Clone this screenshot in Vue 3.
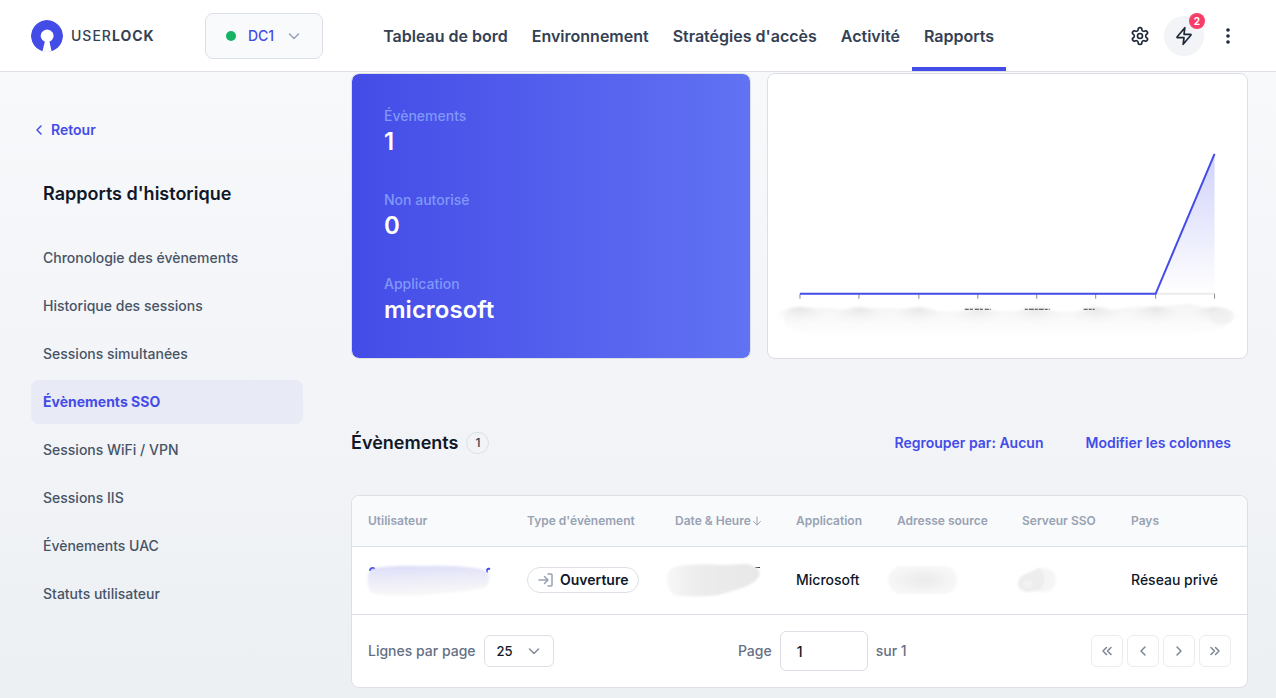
<template>
  <div class="app">
    <header class="header">
      <a class="brand" href="#" aria-label="UserLock">
        <svg class="brand-logo" viewBox="0 0 32 32" aria-hidden="true">
          <circle cx="16" cy="16" r="16" fill="#444ce7" />
          <path d="M13.8 21.8a6.4 6.4 0 1 1 4.7 0L21 33H11z" fill="#fff" />
        </svg>
        <span class="brand-name">USER<b>LOCK</b></span>
      </a>
      <button class="server" type="button">
        <span class="server-dot"></span>
        <span>{{ server }}</span>
        <svg class="icon-16" viewBox="0 0 16 16" aria-hidden="true"><path d="M3.5 6 8 10.5 12.5 6" /></svg>
      </button>
      <nav class="nav">
        <a
          v-for="item in navItems"
          :key="item"
          href="#"
          class="nav-link"
          :class="{ active: item === currentNav }"
          @click.prevent="currentNav = item"
        >{{ item }}</a>
      </nav>
      <div class="actions">
        <button class="action" type="button" aria-label="Paramètres">
          <svg class="icon-20" viewBox="0 0 24 24" aria-hidden="true">
            <path d="M12.22 2h-.44a2 2 0 0 0-2 2v.18a2 2 0 0 1-1 1.73l-.43.25a2 2 0 0 1-2 0l-.15-.08a2 2 0 0 0-2.73.73l-.22.38a2 2 0 0 0 .73 2.73l.15.1a2 2 0 0 1 1 1.72v.51a2 2 0 0 1-1 1.74l-.15.09a2 2 0 0 0-.73 2.73l.22.38a2 2 0 0 0 2.73.73l.15-.08a2 2 0 0 1 2 0l.43.25a2 2 0 0 1 1 1.73V20a2 2 0 0 0 2 2h.44a2 2 0 0 0 2-2v-.18a2 2 0 0 1 1-1.73l.43-.25a2 2 0 0 1 2 0l.15.08a2 2 0 0 0 2.73-.73l.22-.39a2 2 0 0 0-.73-2.73l-.15-.08a2 2 0 0 1-1-1.74v-.5a2 2 0 0 1 1-1.74l.15-.09a2 2 0 0 0 .73-2.73l-.22-.38a2 2 0 0 0-2.73-.73l-.15.08a2 2 0 0 1-2 0l-.43-.25a2 2 0 0 1-1-1.73V4a2 2 0 0 0-2-2z" />
            <circle cx="12" cy="12" r="3" />
          </svg>
        </button>
        <button class="action filled" type="button" aria-label="Actions rapides">
          <svg class="icon-20" viewBox="0 0 24 24" aria-hidden="true">
            <path d="M13 2 4.09 12.69c-.35.42-.52.63-.52.81 0 .15.07.3.19.39.14.11.41.11.96.11H12l-1 8 8.91-10.69c.35-.42.52-.63.52-.81a.5.5 0 0 0-.19-.39c-.14-.11-.41-.11-.96-.11H12l1-8z" />
          </svg>
          <span class="badge">2</span>
        </button>
        <button class="action" type="button" aria-label="Menu">
          <svg class="icon-20" viewBox="0 0 20 20" aria-hidden="true">
            <g class="dots">
              <circle cx="10" cy="4" r="1.8" />
              <circle cx="10" cy="10" r="1.8" />
              <circle cx="10" cy="16" r="1.8" />
            </g>
          </svg>
        </button>
      </div>
    </header>

    <div class="page">
      <aside class="sidebar">
        <a class="back" href="#">
          <svg class="icon-16" viewBox="0 0 16 16" aria-hidden="true"><path d="M10 4 6 8l4 4" /></svg>
          Retour
        </a>
        <h2 class="sidebar-title">Rapports d'historique</h2>
        <nav class="menu">
          <a
            v-for="report in reports"
            :key="report"
            href="#"
            class="menu-link"
            :class="{ active: report === currentReport }"
            @click.prevent="currentReport = report"
          >{{ report }}</a>
        </nav>
      </aside>

      <main class="content">
        <div class="cards">
          <dl class="card summary">
            <div v-for="stat in stats" :key="stat.label">
              <dt>{{ stat.label }}</dt>
              <dd>{{ stat.value }}</dd>
            </div>
          </dl>
          <div class="card">
            <svg class="chart" viewBox="0 0 479 284" aria-hidden="true">
              <defs>
                <linearGradient id="area" x1="0" y1="0" x2="0" y2="1">
                  <stop offset="0" stop-color="#444ce7" stop-opacity="0.25" />
                  <stop offset="1" stop-color="#444ce7" stop-opacity="0" />
                </linearGradient>
                <linearGradient id="axisFade" x1="0" y1="0" x2="0" y2="1">
                  <stop offset="0" stop-color="#f4f4f4" />
                  <stop offset="0.4" stop-color="#f9f9f9" />
                  <stop offset="1" stop-color="#ffffff" />
                </linearGradient>
                <radialGradient id="spot" cx="0.5" cy="0.1" r="0.8">
                  <stop offset="0" stop-color="#dcdcdc" />
                  <stop offset="1" stop-color="#ffffff" stop-opacity="0" />
                </radialGradient>
                <filter id="soft"><feGaussianBlur stdDeviation="1" /></filter>
              </defs>
              <path d="M388 220H447" stroke="#ebebeb" stroke-width="2" />
              <path v-for="x in ticks" :key="x" :d="`M${x} 220v5`" stroke="#8c8c8c" />
              <path d="M388 220 447 80V220z" fill="url(#area)" />
              <path d="M32 220H388L447 80" fill="none" stroke="#444ce7" stroke-width="2" />
              <!-- blurred date labels -->
              <path d="M16 244q1-9 12-10h33l20 3 28-3 30 1 20 2 40 1 40-1 60 1 45-2 22-3 36-1 20-2 20 5q22 0 22 10-4 10-16 12-50 8-110 8H120q-60 0-95-8-9-3-9-10z" fill="url(#axisFade)" filter="url(#soft)" />
              <ellipse v-for="x in ticks" :key="'s' + x" :cx="x" cy="245" rx="24" ry="12" fill="url(#spot)" fill-opacity="0.6" filter="url(#soft)" />
              <ellipse cx="454" cy="243" rx="12" ry="8" fill="#efefef" fill-opacity="0.6" filter="url(#soft)" />
              <g stroke="#3c3c3c">
                <path d="M197 235.5h26" stroke-dasharray="4 1 3 2" />
                <path d="M257 235.5h25" stroke-dasharray="3 1 5 1" />
                <path d="M316 235.5h11" stroke-dasharray="4 1 3 1" />
              </g>
            </svg>
          </div>
        </div>

        <div class="section-head">
          <h2 class="section-title">Évènements</h2>
          <span class="count">1</span>
          <div class="section-actions">
            <button class="link-button" type="button">Regrouper par: Aucun</button>
            <button class="link-button" type="button">Modifier les colonnes</button>
          </div>
        </div>

        <div class="card table-card">
          <table>
            <colgroup>
              <col v-for="column in columns" :key="column.label" :style="{ width: column.width + 'px' }">
            </colgroup>
            <thead>
              <tr>
                <th v-for="column in columns" :key="column.label" scope="col">
                  <span class="th-label">{{ column.label }}<svg v-if="column.sorted" class="sort" viewBox="0 0 12 12" aria-hidden="true"><path d="M6 2v8M2.5 6.5 6 10l3.5-3.5" /></svg></span>
                </th>
              </tr>
            </thead>
            <tbody>
              <tr>
                <td>
                  <svg class="smudge" width="122" height="34" viewBox="0 0 122 34" aria-hidden="true">
                    <defs>
                      <linearGradient id="userFade" x1="0" y1="0" x2="0.15" y2="1">
                        <stop offset="0" stop-color="#dcdcfa" />
                        <stop offset="0.5" stop-color="#ececf8" />
                        <stop offset="1" stop-color="#f8f8f8" />
                      </linearGradient>
                    </defs>
                    <path d="M2 8q0-3 3-3l2 1M119 10V7q1-2 3-1" fill="none" stroke="#444ce7" stroke-width="2" />
                    <path d="M5 6Q20 2 50 3q30-1 48 1 16 1 22 5 3 8-2 15-12 4-40 6-40 5-72 1Q1 29 0 22-2 9 5 6z" fill="url(#userFade)" filter="url(#soft)" />
                  </svg>
                </td>
                <td>
                  <span class="tag">
                    <svg class="icon-16" viewBox="0 0 16 16" aria-hidden="true"><path d="M1 8h9M6.5 4.5 10 8l-3.5 3.5M10 2h3q1 0 1 1v10q0 1-1 1h-3" /></svg>
                    Ouverture
                  </span>
                </td>
                <td>
                  <svg class="smudge" width="88" height="34" viewBox="0 0 88 34" aria-hidden="true">
                    <defs>
                      <linearGradient id="dateFade" x1="0" y1="0" x2="1" y2="0">
                        <stop offset="0" stop-color="#f7f7f7" />
                        <stop offset="0.4" stop-color="#ebebec" />
                        <stop offset="1" stop-color="#e8e8e8" />
                      </linearGradient>
                    </defs>
                    <path d="M80 4.5h5" stroke="#30343c" />
                    <path d="M2 3Q25 0 44 2l28-1q12 2 13 10-3 9-18 14l-24 7Q20 35-1 32-9 26-8 14-7 5 2 3z" fill="url(#dateFade)" filter="url(#soft)" />
                  </svg>
                </td>
                <td>Microsoft</td>
                <td>
                  <svg class="smudge" width="60" height="34" viewBox="0 0 60 34" aria-hidden="true">
                    <defs>
                      <radialGradient id="addressFade">
                        <stop offset="0" stop-color="#ebebeb" />
                        <stop offset="1" stop-color="#f7f7f7" />
                      </radialGradient>
                    </defs>
                    <rect x="-9" y="3" width="69" height="28" rx="14" fill="url(#addressFade)" filter="url(#soft)" />
                  </svg>
                </td>
                <td>
                  <svg class="smudge" width="34" height="34" viewBox="0 0 34 34" aria-hidden="true">
                    <ellipse cx="21" cy="17" rx="13" ry="12" fill="#f5f5f5" filter="url(#soft)" />
                    <path d="M-4 20Q-3 12 6 10l12-5q9 11 0 22l-10 2Q-4 29-4 20z" fill="#ededed" filter="url(#soft)" />
                    <ellipse cx="6" cy="21" rx="5" ry="4" fill="#f2f2f2" filter="url(#soft)" />
                  </svg>
                </td>
                <td>Réseau privé</td>
              </tr>
            </tbody>
          </table>
          <div class="table-footer">
            <div class="field">
              <label for="rows">Lignes par page</label>
              <div class="select">
                <select id="rows" v-model="rows">
                  <option>25</option>
                  <option>50</option>
                  <option>100</option>
                </select>
                <svg class="icon-16" viewBox="0 0 16 16" aria-hidden="true"><path d="M3.5 6 8 10.5 12.5 6" /></svg>
              </div>
            </div>
            <div class="field">
              <label for="page">Page</label>
              <input id="page" v-model="page" class="page-input" type="text">
              <span>sur 1</span>
            </div>
            <div class="pager">
              <button v-for="step in pager" :key="step.label" type="button" :aria-label="step.label">
                <svg class="icon-16" viewBox="0 0 16 16" aria-hidden="true"><path :d="step.path" /></svg>
              </button>
            </div>
          </div>
        </div>
      </main>
    </div>
  </div>
</template>

<script setup>
import { ref } from 'vue'

const server = ref('DC1')
const navItems = ['Tableau de bord', 'Environnement', "Stratégies d'accès", 'Activité', 'Rapports']
const currentNav = ref('Rapports')

const reports = [
  'Chronologie des évènements',
  'Historique des sessions',
  'Sessions simultanées',
  'Évènements SSO',
  'Sessions WiFi / VPN',
  'Sessions IIS',
  'Évènements UAC',
  'Statuts utilisateur'
]
const currentReport = ref('Évènements SSO')

const stats = [
  { label: 'Évènements', value: '1' },
  { label: 'Non autorisé', value: '0' },
  { label: 'Application', value: 'microsoft' }
]

// eight evenly spaced dates on the axis
const ticks = Array.from({ length: 8 }, (_, i) => Math.round(32 + i * 415 / 7))

const columns = [
  { label: 'Utilisateur', width: 159 },
  { label: "Type d'évènement", width: 148 },
  { label: 'Date & Heure', width: 121, sorted: true },
  { label: 'Application', width: 101 },
  { label: 'Adresse source', width: 125 },
  { label: 'Serveur SSO', width: 109 },
  { label: 'Pays', width: 132 }
]

const rows = ref('25')
const page = ref('1')
const pager = [
  { label: 'Première page', path: 'M7.5 4.5 4 8l3.5 3.5M12 4.5 8.5 8l3.5 3.5' },
  { label: 'Page précédente', path: 'M10 4 6 8l4 4' },
  { label: 'Page suivante', path: 'M6 4l4 4-4 4' },
  { label: 'Dernière page', path: 'M4 4.5 7.5 8 4 11.5M8.5 4.5 12 8l-3.5 3.5' }
]
</script>

<style>
body {
  margin: 0;
}
</style>

<style scoped>
.app {
  min-height: 100vh;
  display: flex;
  flex-direction: column;
  background: linear-gradient(#f9fafc, #f3f4f7 55%, #ecf0f3);
  color: #101828;
  font-family: Inter, "Liberation Sans", sans-serif;
  font-size: 14px;
  font-weight: 500;
  line-height: 20px;
}
.app * {
  box-sizing: border-box;
}
a {
  color: inherit;
  text-decoration: none;
}
button,
input,
select {
  font: inherit;
  color: inherit;
}
button {
  cursor: pointer;
}
svg {
  display: block;
  flex: none;
}
.icon-16,
.icon-20,
.sort {
  fill: none;
  stroke: currentColor;
  stroke-linecap: round;
  stroke-linejoin: round;
}
.icon-16 {
  width: 16px;
  height: 16px;
  stroke-width: 1.5;
}
.icon-20 {
  width: 20px;
  height: 20px;
  stroke-width: 2;
}

.header {
  display: flex;
  align-items: center;
  height: 72px;
  padding: 0 28px 0 31px;
  background: #fff;
  border-bottom: 1px solid #dcdfe6;
}
.brand {
  display: flex;
  align-items: center;
  gap: 8px;
  width: 174px;
  color: #344054;
}
.brand-logo {
  width: 32px;
  height: 32px;
  border-radius: 50%;
}
.brand-name {
  letter-spacing: 1px;
}
.brand-name b {
  font-weight: 700;
}
.server {
  display: flex;
  align-items: center;
  gap: 12px;
  height: 46px;
  padding: 0 20px;
  background: #f9fafc;
  border: 1px solid #dcdfe6;
  border-radius: 8px;
  color: #444ce7;
}
.server-dot {
  width: 10px;
  height: 10px;
  border-radius: 50%;
  background: #16b364;
}
.server .icon-16 {
  color: #98a2b3;
}
.nav {
  display: flex;
  align-self: stretch;
  margin-left: 48px;
}
.nav-link {
  display: flex;
  align-items: center;
  padding: 4px 12px 0;
  border-bottom: 4px solid transparent;
  color: #344054;
  font-size: 16px;
  font-weight: 600;
  white-space: nowrap;
}
.nav-link.active {
  border-bottom-color: #444ce7;
}
.actions {
  display: flex;
  gap: 4px;
  margin-left: auto;
}
.action {
  position: relative;
  display: flex;
  align-items: center;
  justify-content: center;
  width: 40px;
  height: 40px;
  padding: 0;
  border: none;
  border-radius: 50%;
  background: none;
  color: #1d2939;
}
.action.filled {
  background: #f2f4f8;
}
.dots {
  fill: #1d2939;
  stroke: none;
}
.badge {
  position: absolute;
  top: -3px;
  right: -1px;
  width: 16px;
  height: 16px;
  border-radius: 50%;
  background: #f63d68;
  color: #fff;
  font-size: 10px;
  font-weight: 700;
  line-height: 16px;
}

.page {
  display: flex;
  flex: 1;
  gap: 48px;
  padding: 1px 28px 10px 31px;
}
.sidebar {
  flex: none;
  width: 272px;
  padding-top: 47px;
}
.back {
  display: flex;
  align-items: center;
  gap: 4px;
  color: #444ce7;
  font-weight: 600;
}
.sidebar-title {
  margin: 40px 12px 28px;
  font-size: 18px;
  font-weight: 600;
  line-height: 28px;
}
.menu {
  display: flex;
  flex-direction: column;
  gap: 4px;
}
.menu-link {
  padding: 12px;
  border-radius: 8px;
  color: #475467;
}
.menu-link.active {
  background: #e8eaf6;
  color: #444ce7;
  font-weight: 700;
}

.content {
  flex: 1;
  min-width: 0;
}
.card {
  background: #fff;
  border: 1px solid #dcdfe6;
  border-radius: 8px;
}
.cards {
  display: grid;
  grid-template-columns: 5fr 6fr;
  gap: 16px;
}
.summary {
  display: flex;
  flex-direction: column;
  gap: 32px;
  margin: 0;
  padding: 32px;
  background: linear-gradient(90deg, #444ce7, #6172f3) padding-box;
}
.summary dt {
  color: #8098f9;
}
.summary dd {
  margin: 0;
  color: #fff;
  font-size: 24px;
  font-weight: 600;
  line-height: 32px;
}
.chart {
  width: 100%;
  height: auto;
}

.section-head {
  display: flex;
  align-items: center;
  gap: 8px;
  margin: 64px 0 32px;
}
.section-title {
  margin: 0;
  font-size: 18px;
  font-weight: 600;
  line-height: 28px;
}
.count {
  width: 23px;
  height: 22px;
  border: 1px solid #dcdfe6;
  border-radius: 11px;
  color: #344054;
  font-size: 12px;
  text-align: center;
}
.section-actions {
  display: flex;
  gap: 8px;
  margin-left: auto;
}
.link-button {
  height: 40px;
  padding: 0 16px;
  border: 1px solid transparent;
  background: none;
  color: #444ce7;
  font-weight: 600;
}

.table-card {
  overflow: hidden;
}
table {
  width: 100%;
  table-layout: fixed;
  border-collapse: separate;
  border-spacing: 0;
}
th,
td {
  padding: 0 16px;
  border-bottom: 1px solid #dcdfe6;
  text-align: left;
  white-space: nowrap;
}
th {
  height: 51px;
  background: #f9fafc;
  color: #98a2b3;
  font-size: 12px;
  font-weight: 600;
}
td {
  height: 68px;
  padding-bottom: 1px;
}
.th-label {
  display: flex;
  align-items: center;
}
.sort {
  width: 12px;
  height: 12px;
}
.smudge {
  overflow: visible;
}
.tag {
  display: inline-flex;
  align-items: center;
  gap: 6px;
  height: 26px;
  padding: 0 10px;
  border: 1px solid #dcdfe6;
  border-radius: 13px;
  font-weight: 600;
}
.tag .icon-16 {
  color: #98a2b3;
}
.table-footer {
  display: flex;
  align-items: center;
  justify-content: space-between;
  padding: 16px;
  color: #667085;
}
.field {
  display: flex;
  align-items: center;
  gap: 8px;
}
.select {
  position: relative;
}
.select select {
  appearance: none;
  width: 70px;
  height: 32px;
  padding: 0 12px;
  border: 1px solid #dcdfe6;
  border-radius: 6px;
  background: #fff;
  color: #101828;
  font-size: 13px;
}
.select .icon-16 {
  position: absolute;
  top: 8px;
  right: 12px;
  color: #858b98;
  pointer-events: none;
}
.page-input {
  width: 88px;
  height: 40px;
  padding: 0 16px;
  border: 1px solid #dcdfe6;
  border-radius: 6px;
  background: #fff;
  color: #101828;
}
.pager {
  display: flex;
  gap: 4px;
}
.pager button {
  display: flex;
  align-items: center;
  justify-content: center;
  width: 32px;
  height: 32px;
  padding: 0;
  border: 1px solid #eaecf0;
  border-radius: 6px;
  background: #fff;
  color: #7d8492;
}
</style>
